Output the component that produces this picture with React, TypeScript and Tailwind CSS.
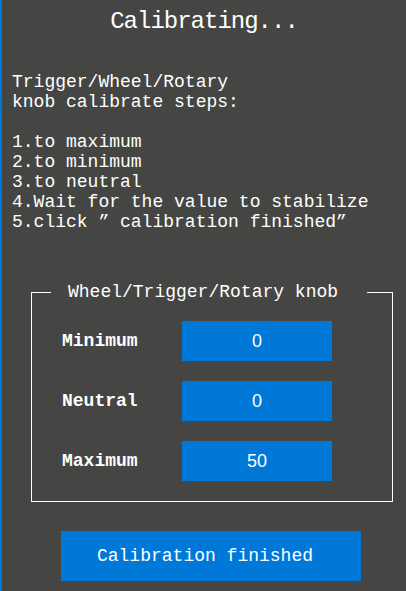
import React from 'react';

const steps = [
    'Trigger/Wheel/Rotary',
    'knob calibrate steps:',
    '\u00a0',
    '1.to maximum',
    '2.to minimum',
    '3.to neutral',
    '4.Wait for the value to stabilize',
    '5.click \u201d calibration finished\u201d',
];

const rows = [
    { label: 'Minimum', value: '0' },
    { label: 'Neutral', value: '0' },
    { label: 'Maximum', value: '50' },
];

const App: React.FC = () => {
    return (
        <div className="w-[406px] h-[591px] overflow-hidden bg-[#454643] border-l-2 border-[#0078d7] text-white font-['Liberation_Mono',monospace]">
            {/* Title */}
            <div className="pt-[6px] h-[38px] text-center text-[24px] leading-[32px] tracking-[-1px]">
                Calibrating...
            </div>

            {/* Steps */}
            <div className="mt-[34px] pl-[10px] text-[18px] leading-[20px]">
                {steps.map((s, i) => (
                    <div key={i} className="whitespace-pre">{s}</div>
                ))}
            </div>

            {/* Values group */}
            <fieldset className="mt-[50px] ml-[29px] w-[362px] border border-white pt-[19px] pb-[20px]">
                <legend className="ml-[19px] pl-[17px] pr-[29px] text-[18px] leading-[20px]">
                    Wheel/Trigger/Rotary knob
                </legend>
                <div className="flex flex-col gap-[20px]">
                    {rows.map((r) => (
                        <div key={r.label} className="flex items-center">
                            <span className="w-[150px] pl-[30px] text-[18px] font-bold">{r.label}</span>
                            <div className="w-[150px] h-[40px] bg-[#0078d7] flex items-center justify-center font-['Liberation_Sans',sans-serif] text-[18px]">
                                {r.value}
                            </div>
                        </div>
                    ))}
                </div>
            </fieldset>

            <button className="mt-[29px] ml-[59px] w-[300px] h-[50px] pr-[12px] bg-[#0078d7] text-[18px] text-white">
                Calibration finished
            </button>
        </div>
    );
};

export default App;
